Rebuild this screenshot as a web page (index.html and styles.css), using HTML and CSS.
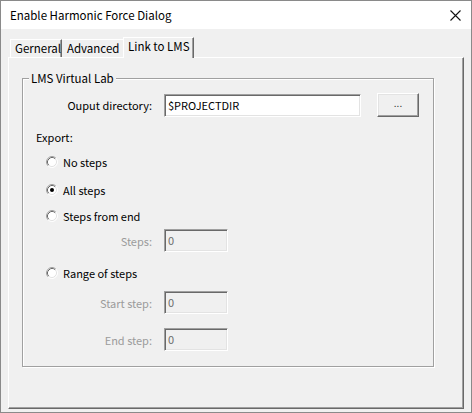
FILE: index.html
```html
<!DOCTYPE html>
<html>
<head>
<meta charset="utf-8">
<link rel="stylesheet" href="styles.css">
</head>
<body>
<div class="window">
  <div class="titlebar">
    <span class="title">Enable Harmonic Force Dialog</span>
    <svg class="close" width="11" height="11" viewBox="0 0 11 11"><path d="M0.5 0.5 L10.5 10.5 M10.5 0.5 L0.5 10.5" stroke="#111" stroke-width="1.1" fill="none"/></svg>
  </div>
  <div class="content">
    <div class="tabs">
      <div class="tab tab-general">Gerneral</div>
      <div class="tab tab-advanced">Advanced</div>
      <div class="tab tab-active">Link to LMS</div>
    </div>
    <div class="panel">
      <div class="group">
        <span class="legend">LMS Virtual Lab</span>
        <div class="row row-dir">
          <span class="label">Ouput directory:</span>
          <div class="edit edit-dir">$PROJECTDIR</div>
          <div class="button">...</div>
        </div>
        <div class="export">Export:</div>
        <div class="radio r-none"><svg width="12" height="12" viewBox="0 0 12 12"><circle cx="6" cy="6" r="5" fill="#fff"/><path d="M2.11 9.89 A5.5 5.5 0 0 1 9.89 2.11" stroke="#a0a0a0" fill="none"/><path d="M2.82 9.18 A4.5 4.5 0 0 1 9.18 2.82" stroke="#696969" fill="none"/><path d="M9.89 2.11 A5.5 5.5 0 0 1 2.11 9.89" stroke="#fff" fill="none"/><path d="M9.18 2.82 A4.5 4.5 0 0 1 2.82 9.18" stroke="#e3e3e3" fill="none"/></svg><span>No steps</span></div>
        <div class="radio r-all"><svg width="12" height="12" viewBox="0 0 12 12"><circle cx="6" cy="6" r="5" fill="#fff"/><path d="M2.11 9.89 A5.5 5.5 0 0 1 9.89 2.11" stroke="#a0a0a0" fill="none"/><path d="M2.82 9.18 A4.5 4.5 0 0 1 9.18 2.82" stroke="#696969" fill="none"/><path d="M9.89 2.11 A5.5 5.5 0 0 1 2.11 9.89" stroke="#fff" fill="none"/><path d="M9.18 2.82 A4.5 4.5 0 0 1 2.82 9.18" stroke="#e3e3e3" fill="none"/><circle cx="6" cy="6" r="2" fill="#000"/></svg><span>All steps</span></div>
        <div class="radio r-end"><svg width="12" height="12" viewBox="0 0 12 12"><circle cx="6" cy="6" r="5" fill="#fff"/><path d="M2.11 9.89 A5.5 5.5 0 0 1 9.89 2.11" stroke="#a0a0a0" fill="none"/><path d="M2.82 9.18 A4.5 4.5 0 0 1 9.18 2.82" stroke="#696969" fill="none"/><path d="M9.89 2.11 A5.5 5.5 0 0 1 2.11 9.89" stroke="#fff" fill="none"/><path d="M9.18 2.82 A4.5 4.5 0 0 1 2.82 9.18" stroke="#e3e3e3" fill="none"/></svg><span>Steps from end</span></div>
        <div class="row row-steps">
          <span class="label disabled">Steps:</span>
          <div class="edit edit-small">0</div>
        </div>
        <div class="radio r-range"><svg width="12" height="12" viewBox="0 0 12 12"><circle cx="6" cy="6" r="5" fill="#fff"/><path d="M2.11 9.89 A5.5 5.5 0 0 1 9.89 2.11" stroke="#a0a0a0" fill="none"/><path d="M2.82 9.18 A4.5 4.5 0 0 1 9.18 2.82" stroke="#696969" fill="none"/><path d="M9.89 2.11 A5.5 5.5 0 0 1 2.11 9.89" stroke="#fff" fill="none"/><path d="M9.18 2.82 A4.5 4.5 0 0 1 2.82 9.18" stroke="#e3e3e3" fill="none"/></svg><span>Range of steps</span></div>
        <div class="row row-start">
          <span class="label disabled">Start step:</span>
          <div class="edit edit-small">0</div>
        </div>
        <div class="row row-endstep">
          <span class="label disabled">End step:</span>
          <div class="edit edit-small">0</div>
        </div>
      </div>
    </div>
  </div>
</div>
</body>
</html>
```
FILE: styles.css
```css
html, body {
  margin: 0;
  padding: 0;
  background: #f0f0f0;
}
body {
  font-family: "Noto Sans CJK KR", "Noto Sans", sans-serif;
  font-size: 11px;
  color: #000;
}
.window {
  box-sizing: border-box;
  width: 472px;
  height: 413px;
  border: 1px solid #8a8a8a;
  background: #f0f0f0;
  display: flex;
  flex-direction: column;
}
.titlebar {
  height: 28px;
  background: #fff;
  display: flex;
  align-items: center;
  justify-content: space-between;
  padding: 0 10px 0 9px;
  font-size: 11.5px;
}
.title {
  line-height: 16px;
}
.close {
  display: block;
}
.content {
  padding: 0 7px;
}
.tabs {
  margin-top: 8px;
  height: 20px;
  display: flex;
  align-items: flex-end;
  padding-left: 2px;
  position: relative;
  z-index: 1;
}
.tab {
  box-sizing: border-box;
  flex-shrink: 0;
  white-space: nowrap;
  height: 18px;
  line-height: 16px;
  padding-top: 0;
  border-top: 1px solid #fff;
  border-left: 1px solid #fff;
  border-right: 1px solid #696969;
  box-shadow: inset -1px 0 0 #a0a0a0;
  background: #f0f0f0;
  font-size: 11.5px;
}
.tab-general {
  width: 52px;
  padding-left: 4px;
}
.tab-advanced {
  width: 61px;
  padding-left: 5px;
  border-left: none;
  border-right: none;
  box-shadow: none;
}
.tab-active {
  width: 71px;
  height: 21px;
  margin-bottom: -1px;
  padding-left: 4px;
  padding-top: 0;
}
.panel {
  box-sizing: border-box;
  height: 352px;
  border-top: 1px solid #fff;
  border-left: 1px solid #fff;
  border-right: 1px solid #696969;
  border-bottom: 1px solid #696969;
  box-shadow: inset -1px -1px 0 #a0a0a0;
  padding-top: 20px;
  padding-left: 13px;
}
.group {
  position: relative;
  box-sizing: border-box;
  width: 412px;
  height: 289px;
  border: 1px solid #a0a0a0;
  box-shadow: 1px 1px 0 #fff, inset 1px 1px 0 #fff;
  padding-top: 14px;
}
.legend {
  position: absolute;
  top: -9px;
  left: 6px;
  padding: 0 2px;
  line-height: 16px;
  background: #f0f0f0;
  font-size: 11.5px;
}
.row {
  display: flex;
  align-items: center;
}
.label {
  width: 129px;
  text-align: right;
  margin-right: 12px;
  line-height: 16px;
}
.disabled {
  color: #9b9b9b;
}
.edit {
  box-sizing: border-box;
  height: 23px;
  border-top: 1px solid #a0a0a0;
  border-left: 1px solid #a0a0a0;
  border-right: 1px solid #fff;
  border-bottom: 1px solid #fff;
  box-shadow: inset 1px 1px 0 #696969, inset -1px -1px 0 #e3e3e3;
  padding: 2px 0 0 3px;
  line-height: 16px;
}
.edit-dir {
  width: 197px;
  background: #fff;
}
.edit-small {
  width: 64px;
  color: #6d6d6d;
}
.button {
  box-sizing: border-box;
  width: 42px;
  height: 24px;
  margin-left: 16px;
  border-top: 1px solid #fff;
  border-left: 1px solid #fff;
  border-right: 1px solid #696969;
  border-bottom: 1px solid #696969;
  box-shadow: inset -1px -1px 0 #a0a0a0, inset 1px 1px 0 #e3e3e3;
  text-align: center;
  line-height: 18px;
  color: #333;
  font-size: 10px;
}
.export {
  margin-top: 12px;
  margin-left: 13px;
  line-height: 16px;
}
.radio {
  display: flex;
  align-items: center;
  margin-left: 23px;
  height: 16px;
  line-height: 16px;
}
.radio svg {
  display: block;
  margin-right: 5px;
}
.r-none { margin-top: 9px; }
.r-all { margin-top: 12px; }
.r-end { margin-top: 10px; }
.row-steps { margin-top: 5px; }
.r-range { margin-top: 13px; }
.row-start { margin-top: 10px; }
.row-endstep { margin-top: 14px; }
```
